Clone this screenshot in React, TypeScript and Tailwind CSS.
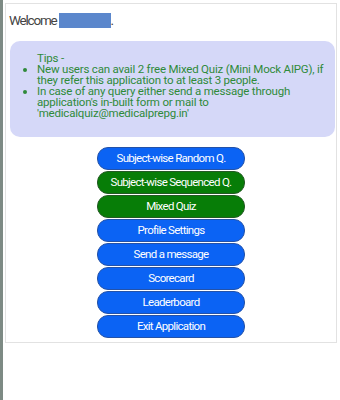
import React from "react";

const buttons: { label: string; green?: boolean }[] = [
  { label: "Subject-wise Random Q." },
  { label: "Subject-wise Sequenced Q.", green: true },
  { label: "Mixed Quiz", green: true },
  { label: "Profile Settings" },
  { label: "Send a message" },
  { label: "Scorecard" },
  { label: "Leaderboard" },
  { label: "Exit Application" },
];

export default function App() {
  return (
    <div className="w-[340px] h-[400px] bg-white flex" style={{ fontFamily: "Roboto, 'Liberation Sans', sans-serif" }}>
      <div className="w-[3px] h-full bg-[#7d8a84]" />
      <div className="flex-1 pl-[2px] pr-[3px] pt-[3px]">
        <div className="border border-[#e2e2e2] h-[340px] flex flex-col">
          <div className="flex items-center h-[33px] pl-[3px] text-[13.5px] text-[#444]">
            <span className="tracking-[-1.2px]">Welcome</span>
            <span className="ml-[2px] inline-block w-[52px] h-[15px] bg-[#5b87cc]" />
            <span>.</span>
          </div>
          <div className="ml-[4px] mr-[1px] mt-[4px] h-[96px] rounded-[10px] bg-[#d5d8f8] pl-[27px] pr-[2px] pt-[12px] text-[11.5px] leading-[11px] tracking-[-0.2px] text-[#2f8a3a] whitespace-nowrap">
            <div>Tips -</div>
            <ul className="list-disc pl-0">
              <li>
                New users can avail 2 free Mixed Quiz (Mini Mock AIPG), if
                <br />
                they refer this application to at least 3 people.
              </li>
              <li>
                In case of any query either send a message through
                <br />
                application's in-built form or mail to
                <br />
                'medicalquiz@medicalprepg.in'
              </li>
            </ul>
          </div>
          <div className="flex flex-col items-center gap-[1px] mt-[10px]">
            {buttons.map((b) => (
              <div
                key={b.label}
                className={
                  b.green
                    ? "w-[148px] h-[23px] rounded-[11px] bg-[#077d07] border border-[#245a24] flex items-center justify-center text-white text-[11.5px] tracking-[-0.7px]"
                    : "w-[148px] h-[23px] rounded-[11px] bg-[#0b63f4] border border-[#2452a8] flex items-center justify-center text-white text-[11.5px] tracking-[-0.7px]"
                }
              >
                {b.label}
              </div>
            ))}
          </div>
        </div>
      </div>
    </div>
  );
}
